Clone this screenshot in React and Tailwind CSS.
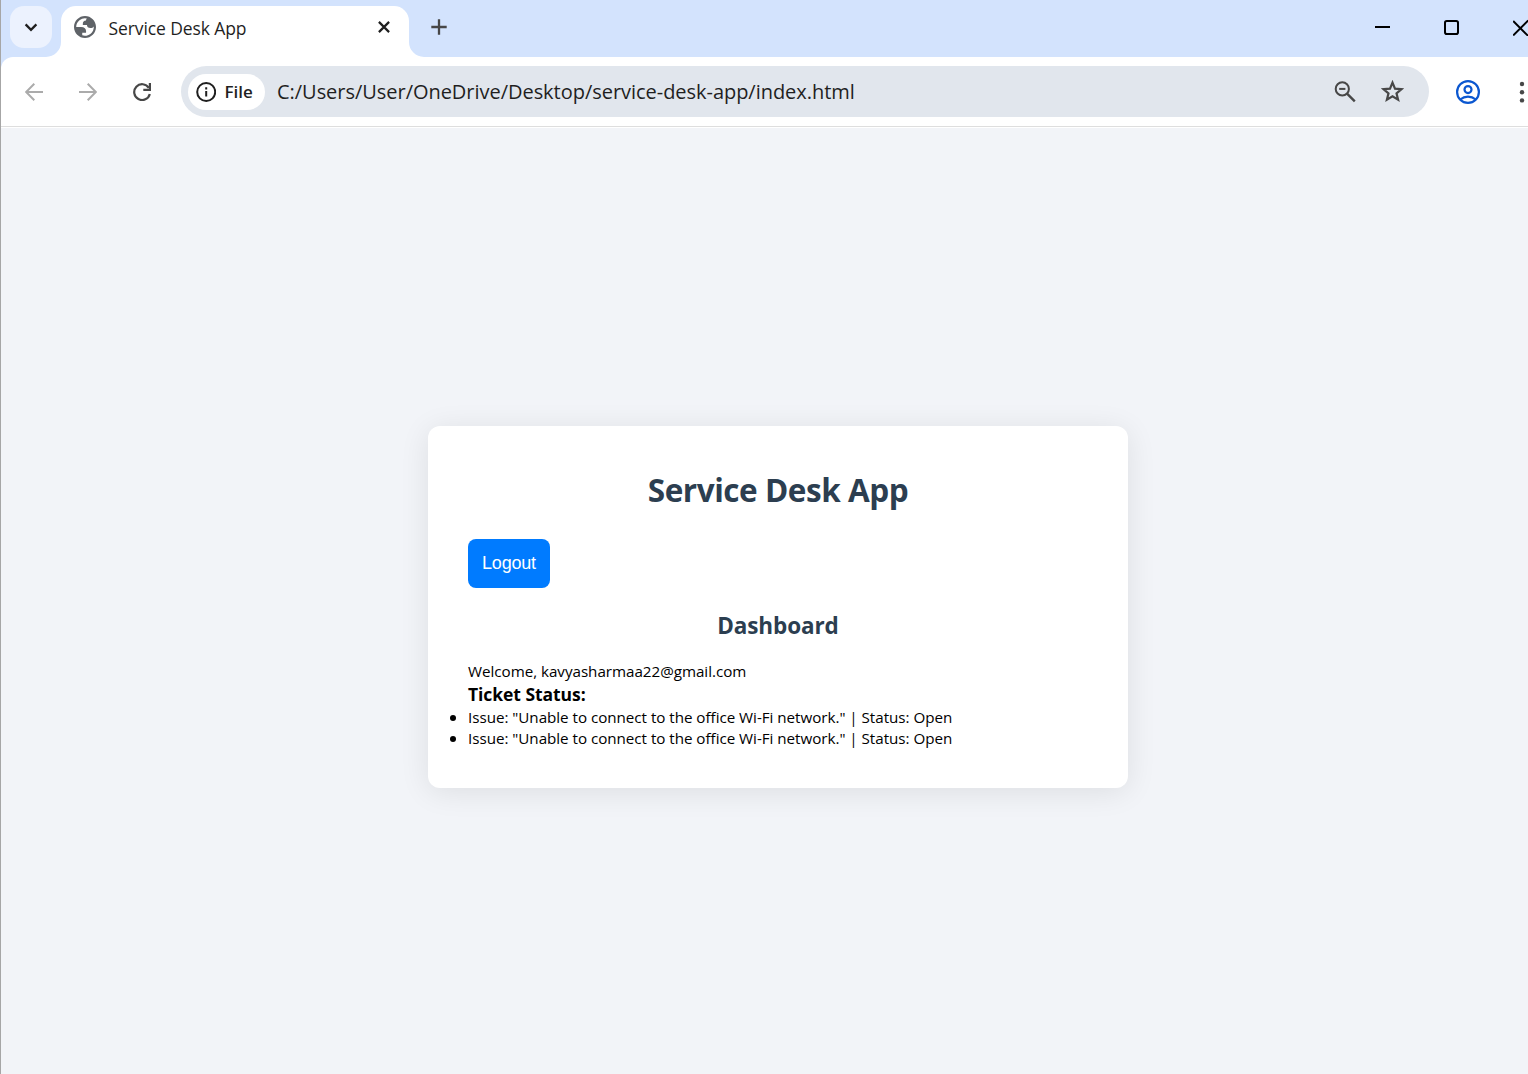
function ChevronDown() {
  return (
    <svg className="size-[42px]" viewBox="0 0 42 42" fill="none" stroke="#1f1f1f" strokeWidth="2.3">
      <path d="M15.6 18.4 21 23.8l5.4-5.4" />
    </svg>
  );
}

function Globe() {
  return (
    <svg className="size-[22px] shrink-0" viewBox="2 2 20 20" fill="#5f6368">
      <path
        fillRule="evenodd"
        d="M12 2C6.48 2 2 6.48 2 12s4.480 10 10 10 10-4.480 10-10S17.520 2 12 2zM4 12h4.400c3.407.022 4.922 1.730 4.543 5.127H9.488v2.470a8.004 8.004 0 0 0 10.498-8.083C19.327 12.504 18.332 13 17 13c-2.137 0-3.206-.916-3.206-2.750h-3.748c-.274-2.728.683-4.092 2.870-4.092 0-.975.327-1.597.811-1.970A8.004 8.004 0 0 0 4 12z"
      />
    </svg>
  );
}

function TabStrip() {
  return (
    <div className="flex h-[57px] items-start bg-[#d3e3fd] pl-[9px] pt-[6px]">
      <button className="size-[42px] shrink-0 rounded-[14px] bg-[#ecf2fe]">
        <ChevronDown />
      </button>
      <div className="relative ml-[9px] flex h-[51px] w-[348px] shrink-0 items-start rounded-t-[15px] bg-white pl-[13px]">
        <svg className="absolute -left-[15px] bottom-0 size-[15px]" viewBox="0 0 15 15" fill="#fff">
          <path d="M15 0v15H0A15 15 0 0 0 15 0Z" />
        </svg>
        <svg className="absolute -right-[15px] bottom-0 size-[15px]" viewBox="0 0 15 15" fill="#fff">
          <path d="M0 0v15h15A15 15 0 0 1 0 0Z" />
        </svg>
        <div className="mt-[10px] flex">
          <Globe />
        </div>
        <span className="ml-[12.5px] mt-[9px] w-[269.5px] whitespace-nowrap text-[17.5px] leading-[26px] tracking-[-0.1px] text-[#1f1f1f]">
          Service Desk App
        </span>
        <svg className="mt-[15px] size-[12px] shrink-0" viewBox="0 0 12 12" stroke="#1f1f1f" strokeWidth="2.2">
          <path d="m.9.9 10.2 10.2M11.1.9.900 11.100" />
        </svg>
      </div>
      <svg className="ml-[22px] mt-[13px] size-[16px] shrink-0" viewBox="0 0 16 16" stroke="#474747" strokeWidth="2.3">
        <path d="M8 .3v15.400M.3 8h15.400" />
      </svg>
      <div className="flex flex-1 justify-end gap-[54px] pt-[13px]">
        <svg className="h-[17px] w-[15px]" viewBox="0 0 15 17" stroke="#000" strokeWidth="2">
          <path d="M0 8h15" />
        </svg>
        <svg className="h-[17px] w-[15px]" viewBox="0 0 15 17" fill="none" stroke="#000" strokeWidth="2">
          <rect x="1" y="2" width="13" height="13" rx="1.800" />
        </svg>
        <svg className="h-[17px] w-[15px]" viewBox="0 0 15 17" stroke="#000" strokeWidth="1.900">
          <path d="m.2 2 15 15M.2 16.500l15-15" />
        </svg>
      </div>
    </div>
  );
}

function Toolbar() {
  return (
    <div className="bg-[#d3e3fd]">
      <div className="flex h-[69px] items-center rounded-tl-[12px] bg-white pl-[24px]">
        <svg className="size-[18px] shrink-0" viewBox="0 0 18 18" fill="none" stroke="#ababab" strokeWidth="2">
          <path d="M18 9H1.500M9.300.8 1.100 9l8.200 8.200" />
        </svg>
        <svg className="ml-[36px] size-[18px] shrink-0" viewBox="0 0 18 18" fill="none" stroke="#ababab" strokeWidth="2">
          <path d="M0 9h16.500M8.700.8 16.900 9l-8.200 8.200" />
        </svg>
        <svg className="ml-[36px] size-[18px] shrink-0" viewBox="0 0 18 18" fill="none" stroke="#474747" strokeWidth="2.200">
          <path d="M16.800 11A7.900 7.900 0 1 1 15.800 4.900" />
          <path d="M16.900 0v6.900h-6.600" />
        </svg>
        <div className="ml-[30px] flex h-[51px] w-[1248px] shrink-0 items-center rounded-full bg-[#e1e6ed] pl-[7px]">
          <div className="flex h-[36px] w-[77px] items-center rounded-full bg-white pl-[8px]">
            <svg className="size-[20px]" viewBox="0 0 20 20" fill="none" stroke="#1f1f1f" strokeWidth="2">
              <circle cx="10.200" cy="10" r="9" />
              <path d="M10.200 9v5.500M10.200 5.300v2.200" />
            </svg>
            <span className="ml-[8.5px] text-[17px] font-semibold leading-[24px] text-[#1f1f1f]">File</span>
          </div>
          <span className="ml-[12px] w-[1057px] whitespace-nowrap text-[20px] leading-[28px] tracking-[-0.035px] text-[#1f1f1f]">
            C:/Users/User/OneDrive/Desktop/service-desk-app/index.html
          </span>
          <svg className="size-[22px] shrink-0" viewBox="0 0 22 22" fill="none" stroke="#474747" strokeWidth="2">
            <circle cx="8.300" cy="7.900" r="6.600" />
            <path d="M5.200 7.900h6.200" />
            <path d="m13 12.600 7.800 7.800" strokeWidth="2.400" />
          </svg>
          <svg className="ml-[25px] size-[23px] shrink-0" viewBox="0 0 23 23" fill="none" stroke="#474747" strokeWidth="2.200">
            <path d="m11.500 2.600 2.500 6 6.500.5-5 4.200 1.600 6.400-5.600-3.400-5.600 3.400 1.600-6.400-5-4.200L9 8.600Z" />
          </svg>
        </div>
        <svg className="ml-[27px] size-[24px] shrink-0" viewBox="0 0 24 24" fill="none" stroke="#0b57d0" strokeWidth="2.200">
          <circle cx="12" cy="12" r="10.900" />
          <circle cx="12" cy="9.600" r="3.500" />
          <path d="M4.200 19.500c4.600-3.800 11-3.800 15.600 0" />
        </svg>
        <svg className="ml-[39px] h-[22px] w-[6px] shrink-0" viewBox="0 0 6 22" fill="#474747">
          <circle cx="3" cy="3" r="2.200" />
          <circle cx="3" cy="11.200" r="2.200" />
          <circle cx="3" cy="19.400" r="2.200" />
        </svg>
      </div>
    </div>
  );
}

const tickets = [
  { issue: "Unable to connect to the office Wi-Fi network.", status: "Open" },
  { issue: "Unable to connect to the office Wi-Fi network.", status: "Open" },
];

function Dashboard() {
  return (
    <main className="h-[362px] w-[700px] rounded-[12px] bg-white p-[40px] text-black shadow-[0_4px_30px_rgba(0,0,0,0.09)]">
      <h1 className="pt-px text-center text-[31.5px] font-bold leading-[46px] tracking-[-0.45px] text-[#2c3e50]">
        Service Desk App
      </h1>
      <button className="mt-[26px] block h-[49px] w-[82px] rounded-[8px] bg-[#007bff] font-['Liberation_Sans',sans-serif] text-[18px] tracking-[-0.2px] text-white">
        Logout
      </button>
      <h2 className="mt-[22px] text-center text-[22.5px] font-bold leading-[32px] tracking-[-0.1px] text-[#2c3e50]">
        Dashboard
      </h2>
      <p className="mt-[19px] text-[15.2px] leading-[21px] tracking-[-0.03px]">Welcome, kavyasharmaa22@gmail.com</p>
      <h3 className="text-[17.5px] font-bold leading-[25px] tracking-[-0.06px]">Ticket Status:</h3>
      <ul className="text-[15.2px] leading-[21px] tracking-[-0.03px]">
        {tickets.map((t, i) => (
          <li
            key={i}
            className="relative before:absolute before:-left-[18px] before:top-[8px] before:size-[6px] before:rounded-full before:bg-black"
          >
            {`Issue: "${t.issue}" | Status: ${t.status}`}
          </li>
        ))}
      </ul>
    </main>
  );
}

export default function App() {
  return (
    <div className="flex h-[1074px] w-[1528px] flex-col overflow-hidden border-l border-[#a6a6a6] bg-[#f2f4f8] font-['Open_Sans',sans-serif]">
      <TabStrip />
      <Toolbar />
      <div className="h-px shrink-0 bg-[#dedede]" />
      <div className="h-px shrink-0 bg-white" />
      <div className="flex flex-1 pl-[427px] pt-[298px]">
        <Dashboard />
      </div>
    </div>
  );
}
